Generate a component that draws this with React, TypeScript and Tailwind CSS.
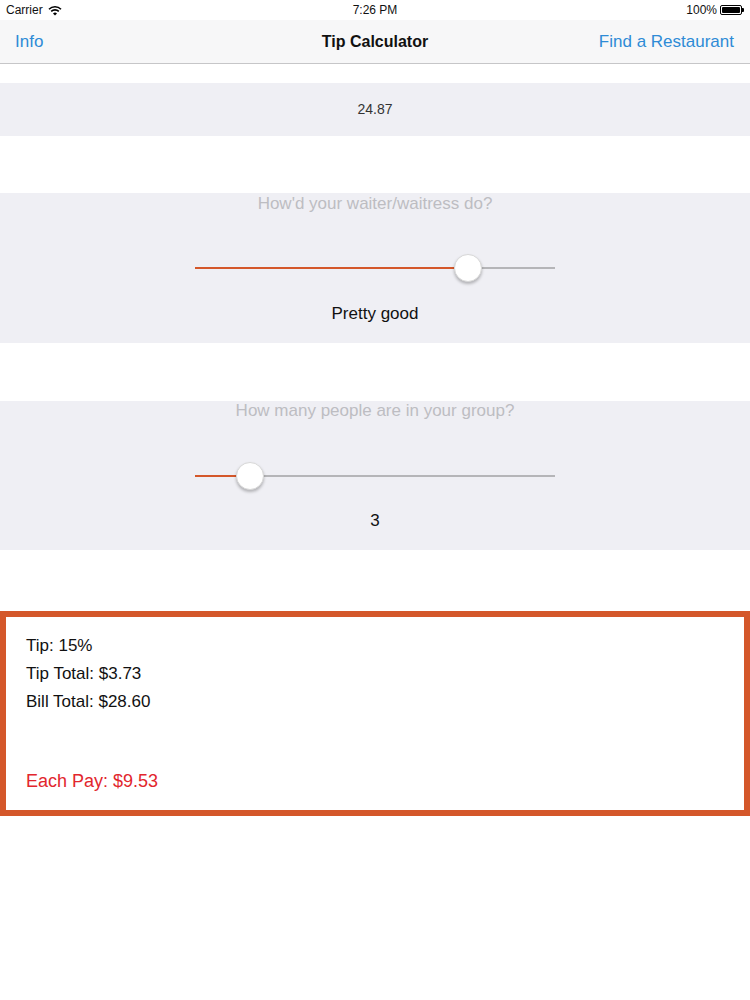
import React from "react";

const font = { fontFamily: '"Liberation Sans", Arial, sans-serif' };

interface SliderProps {
  value: number; // 0..1
}

function Slider({ value }: SliderProps) {
  const left = value * 360;
  return (
    <div className="relative w-[360px] h-[30px] mx-auto">
      <div className="absolute left-0 right-0 top-[14px] h-[2px] bg-[#b5b5b8]" />
      <div className="absolute left-0 top-[14px] h-[2px] bg-[#d4572a]" style={{ width: left }} />
      <div
        className="absolute top-[1px] w-[28px] h-[28px] rounded-full bg-white border border-[#d8d8d8] shadow-[0_2px_3px_rgba(0,0,0,0.25)]"
        style={{ left: left - 14 }}
      />
    </div>
  );
}

function Battery() {
  return (
    <div className="flex items-center">
      <div className="w-[22px] h-[10px] border border-black rounded-[2px] p-[1px]">
        <div className="w-full h-full bg-black rounded-[1px]" />
      </div>
      <div className="w-[2px] h-[4px] bg-black rounded-r-[1px]" />
    </div>
  );
}

function Wifi() {
  return (
    <svg width="14" height="11" viewBox="0 0 14 11">
      <path d="M1 4.2a8.5 8.5 0 0 1 12 0" stroke="#000" strokeWidth="1.6" fill="none" />
      <path d="M3.2 6.4a5.4 5.4 0 0 1 7.6 0" stroke="#000" strokeWidth="1.6" fill="none" />
      <path d="M7 10.5 L5 8.4 a2.8 2.8 0 0 1 4 0 Z" fill="#000" />
    </svg>
  );
}

export default function App() {
  return (
    <div className="w-[750px] h-[1000px] bg-white text-[#111]" style={font}>
      {/* status bar */}
      <div className="h-[20px] flex items-center justify-between px-[6px] text-[12px] font-medium relative">
        <div className="flex items-center gap-[5px]">
          <span>Carrier</span>
          <Wifi />
        </div>
        <span className="absolute left-1/2 -translate-x-1/2">7:26 PM</span>
        <div className="flex items-center gap-[3px]">
          <span>100%</span>
          <Battery />
        </div>
      </div>

      {/* nav bar */}
      <div className="h-[44px] bg-[#f7f7f8] border-b border-[#c6c6c8] flex items-center justify-between px-[15px] relative text-[17px]">
        <span className="text-[#2e8bd6]">Info</span>
        <span className="absolute left-1/2 -translate-x-1/2 font-semibold text-[16px]">Tip Calculator</span>
        <span className="text-[#2e8bd6] mr-[1px]">Find a Restaurant</span>
      </div>

      <div className="h-[19px]" />

      {/* bill amount */}
      <div className="h-[53px] bg-[#efeff4] flex items-center justify-center text-[14px] text-[#333]">
        24.87
      </div>

      <div className="h-[57px]" />

      {/* service rating */}
      <div className="h-[150px] bg-[#efeff4] flex flex-col items-center">
        <div className="h-[22px] leading-[22px] text-[17px] text-[#bdbdc2]">How'd your waiter/waitress do?</div>
        <div className="mt-[38px]">
          <Slider value={273 / 360} />
        </div>
        <div className="mt-[21px] h-[20px] leading-[20px] text-[17px]">Pretty good</div>
      </div>

      <div className="h-[58px]" />

      {/* group size */}
      <div className="h-[149px] bg-[#efeff4] flex flex-col items-center">
        <div className="h-[20px] leading-[20px] text-[17px] text-[#bdbdc2]">How many people are in your group?</div>
        <div className="mt-[40px]">
          <Slider value={55 / 360} />
        </div>
        <div className="mt-[20px] h-[20px] leading-[20px] text-[17px]">3</div>
      </div>

      <div className="h-[61px]" />

      {/* results */}
      <div className="h-[205px] border-[6px] border-[#d4572a] px-[20px] pt-[15px] text-[17px]">
        <div className="leading-[28px]">Tip: 15%</div>
        <div className="leading-[28px]">Tip Total: $3.73</div>
        <div className="leading-[28px]">Bill Total: $28.60</div>
        <div className="leading-[28px] mt-[51px] text-[18px] text-[#e2262d]">Each Pay: $9.53</div>
      </div>
    </div>
  );
}
